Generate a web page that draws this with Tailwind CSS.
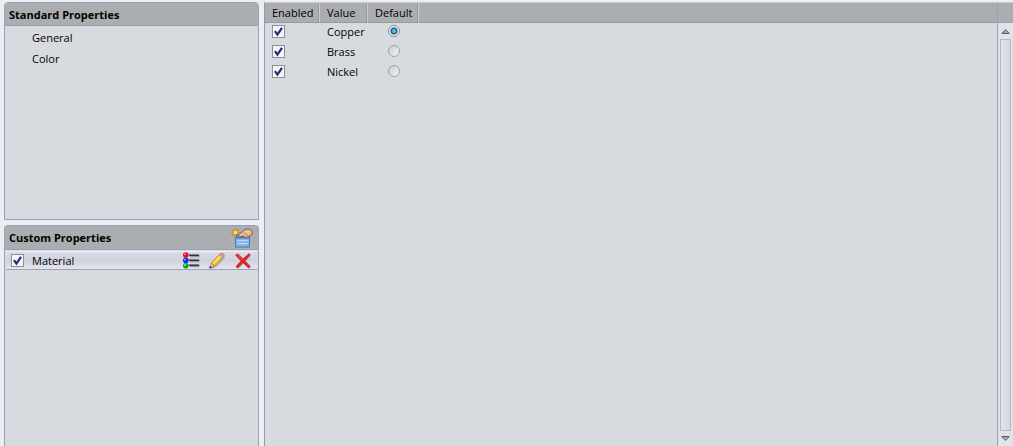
<!DOCTYPE html>
<html lang="en">
<head>
  <meta charset="UTF-8" />
  <meta name="viewport" content="width=device-width, initial-scale=1.0" />
  <title>Properties</title>
  <script src="https://cdn.jsdelivr.net/npm/@tailwindcss/browser@4"></script>
</head>
<body class="h-screen overflow-hidden bg-[#ebeef2] font-['Open_Sans','Noto_Sans',sans-serif] text-[11px] leading-5 text-black">

  <!-- Shared tick mark -->
  <svg class="hidden">
    <symbol id="tick" viewBox="0 0 13 13">
      <path d="M3 6.2 L5.4 9.6 L10 2.8" fill="none" stroke="#29297c" stroke-width="2.2" />
    </symbol>
  </svg>

  <div class="flex h-full pt-0.5 pl-1">

    <!-- Sidebar -->
    <aside class="flex w-[255px] shrink-0 flex-col gap-[5px]">
      <section class="h-[218px] shrink-0 rounded-t border border-[#9aa1bd] bg-[#d7dbe0]">
        <h2 class="h-[23px] rounded-t-[3px] border-b border-[#9aa1bd] bg-[#abadb0] px-1 leading-6 font-bold">Standard Properties</h2>
        <ul class="pt-px pl-[27px] leading-[21px]">
          <li><a href="#general">General</a></li>
          <li><a href="#color">Color</a></li>
        </ul>
      </section>

      <section class="flex-1 rounded-t border border-b-0 border-[#9aa1bd] bg-[#d7dbe0]">
        <div class="flex h-6 items-center justify-between rounded-t-[3px] border-b border-[#9aa1bd] bg-[#abadb0] pr-[5px] pl-1">
          <h2 class="leading-6 font-bold">Custom Properties</h2>
          <button type="button" aria-label="Add property">
            <svg class="block h-[22px] w-[22px]" viewBox="0 0 22 22">
              <rect x="4.5" y="7.5" width="14" height="12.5" fill="#82b6ee" stroke="#4a79b4" />
              <path d="M5 8h13v3.5H5z" fill="#4f82c6" />
              <path d="M6.5 13.5h10M6.5 16.5h10" stroke="#b9d8fa" stroke-width="1" />
              <path d="M7.5 8 C9 6 10.5 5.5 12 4.5 C13.5 2.2 16 1.7 18.5 2.2 C21 3.2 22 5.2 20.8 7.2 C19.5 9.2 18 8.8 16.5 9.8 C15 11.8 13 11.3 13.5 9.6 L12 9.1 L9 9.9 C7.5 10.2 6.8 9 7.5 8Z" fill="#e8c294" stroke="#80552f" stroke-width="1" />
              <path d="M12.5 6.5 L16 6.8 M14 9.3 L17 7.8" stroke="#a77b4e" stroke-width=".7" />
              <path d="M4.5 1v9M0 5.5h9M1.3 2.3l6.4 6.4M7.7 2.3L1.3 8.7" stroke="#e08310" stroke-width="1.2" />
              <circle cx="4.5" cy="5.5" r="1.8" fill="#ffe765" />
            </svg>
          </button>
        </div>

        <div class="mx-px mt-px flex h-[19px] items-center border-y border-t-[#eef0f4] border-b-[#9aa1bd] bg-linear-to-b from-[#d9dce5] via-[#cfd2dd] to-[#e5e6ec] pr-[5px] pl-[5px]">
          <span class="grid size-[13px] place-items-center">
            <input id="material" type="checkbox" checked class="col-start-1 row-start-1 size-[13px] appearance-none border border-[#8e8f8f] bg-[#f4f5f7]" />
            <svg class="pointer-events-none col-start-1 row-start-1 size-[13px]"><use href="#tick" /></svg>
          </span>
          <label for="material" class="flex-1 pl-2">Material</label>
          <div class="flex items-center gap-2">
            <button type="button" aria-label="Edit values">
              <svg class="block h-[18px] w-[18px]" viewBox="0 0 18 18">
                <path d="M8 3.9h9.5M8 8.9h9.5M8 13.9h9.5" stroke="#999ba4" stroke-width="2.5" />
                <path d="M7 3.3h10M7 8.3h10M7 13.3h10" stroke="#343438" stroke-width="1.5" />
                <circle cx="3.8" cy="3" r="2.8" fill="#e60a24" />
                <circle cx="3.8" cy="8.4" r="2.8" fill="#1531df" />
                <circle cx="3.8" cy="13.8" r="2.8" fill="#07a51d" />
                <circle cx="3" cy="2.2" r=".9" fill="#ff9eaa" />
                <circle cx="3" cy="7.6" r=".9" fill="#a8b7ff" />
                <circle cx="3" cy="13" r=".9" fill="#a0f5a8" />
              </svg>
            </button>
            <button type="button" aria-label="Rename">
              <svg class="block h-[18px] w-[18px]" viewBox="0 0 17 18">
                <path d="M2 16.5 L8 14 L16 5" fill="none" stroke="#a9abb5" stroke-width="1.4" />
                <path d="M1 16 L3 11 L6 14Z" fill="#f3d4a4" stroke="#76572a" stroke-width=".6" />
                <path d="M.8 16.2 L1.6 14 L3.2 15.4Z" fill="#26262c" />
                <path d="M3 11 L10.6 2.9 L14 6.2 L6 14Z" fill="#f8c729" stroke="#a57316" stroke-width=".8" />
                <path d="M4.4 11.6 L11.5 4.2" stroke="#fff099" stroke-width="1.1" />
                <path d="M10.6 2.9 L11.7 1.8 L15 5.1 L14 6.2Z" fill="#d7d8df" stroke="#85858e" stroke-width=".5" />
                <path d="M11.7 1.8 Q13.2 .4 14.8 1.8 Q16.7 3.5 15 5.1Z" fill="#e99a8d" stroke="#b5594c" stroke-width=".5" />
              </svg>
            </button>
            <button type="button" aria-label="Delete">
              <svg class="block h-[18px] w-[18px]" viewBox="0 0 17 18">
                <path d="M2.5 3.8 L15.4 16 M15.5 3.7 L3 16.2" stroke="#b3a9b2" stroke-width="2" />
                <path d="M1 3.2 L3.4 1.7 L8.5 6.8 L14.4 1.6 L16 2.7 L10.4 8.7 L16 14.5 L14 16 L8.5 10.8 L3.2 16.1 L1.3 14.6 L6.4 8.9Z" fill="#de2327" stroke="#bd161c" stroke-width=".4" />
                <path d="M3.2 3 L8.5 8.3" stroke="#f26a66" stroke-width=".8" />
              </svg>
            </button>
          </div>
        </div>
      </section>
    </aside>

    <!-- Values list -->
    <main class="ml-[5px] flex min-w-0 flex-1 border-t border-l border-t-[#c5c9d2] border-l-[#969aa5] bg-[#d7dbe0]">
      <div class="min-w-0 flex-1">
        <table class="w-full table-fixed border-separate border-spacing-0 text-left leading-[18px]">
          <thead>
            <tr class="h-5 bg-[#abadb0]">
              <th class="w-[55px] border-r border-b border-r-[#c9cbce] border-b-[#969aa5] p-0 pl-[7px] font-normal shadow-[inset_-1px_0_0_#96989c]">Enabled</th>
              <th class="w-12 border-r border-b border-r-[#c9cbce] border-b-[#969aa5] p-0 pl-[7px] font-normal shadow-[inset_-1px_0_0_#96989c]">Value</th>
              <th class="w-[51px] border-r border-b border-r-[#c9cbce] border-b-[#969aa5] p-0 pl-[7px] font-normal shadow-[inset_-1px_0_0_#96989c]">Default</th>
              <th class="border-b border-[#969aa5] p-0"></th>
            </tr>
          </thead>
          <tbody>
            <tr class="h-5 align-top">
              <td class="p-0 pt-0.5 pl-[7px]">
                <span class="grid size-[13px]">
                  <input type="checkbox" checked aria-label="Enable Copper" class="col-start-1 row-start-1 size-[13px] appearance-none border border-[#8e8f8f] bg-[#f4f5f7]" />
                  <svg class="pointer-events-none col-start-1 row-start-1 size-[13px]"><use href="#tick" /></svg>
                </span>
              </td>
              <td class="p-0 pl-[7px]">Copper</td>
              <td class="p-0 pt-0.5 pl-5"><input type="radio" name="default" checked aria-label="Copper by default" class="block size-3 appearance-none rounded-full border border-[#8e8f8f] bg-[radial-gradient(circle_at_50%_50%,#7fd6f2_0,#2ba0ca_2px,#174f78_3px,#174f78_3px,#e9ebed_4px)]" /></td>
              <td></td>
            </tr>
            <tr class="h-5 align-top">
              <td class="p-0 pt-0.5 pl-[7px]">
                <span class="grid size-[13px]">
                  <input type="checkbox" checked aria-label="Enable Brass" class="col-start-1 row-start-1 size-[13px] appearance-none border border-[#8e8f8f] bg-[#f4f5f7]" />
                  <svg class="pointer-events-none col-start-1 row-start-1 size-[13px]"><use href="#tick" /></svg>
                </span>
              </td>
              <td class="p-0 pl-[7px]">Brass</td>
              <td class="p-0 pt-0.5 pl-5"><input type="radio" name="default" aria-label="Brass by default" class="block size-3 appearance-none rounded-full border border-[#a0a2a5] bg-linear-to-br from-[#c9ccd0] to-[#f2f3f4]" /></td>
              <td></td>
            </tr>
            <tr class="h-5 align-top">
              <td class="p-0 pt-0.5 pl-[7px]">
                <span class="grid size-[13px]">
                  <input type="checkbox" checked aria-label="Enable Nickel" class="col-start-1 row-start-1 size-[13px] appearance-none border border-[#8e8f8f] bg-[#f4f5f7]" />
                  <svg class="pointer-events-none col-start-1 row-start-1 size-[13px]"><use href="#tick" /></svg>
                </span>
              </td>
              <td class="p-0 pl-[7px]">Nickel</td>
              <td class="p-0 pt-0.5 pl-5"><input type="radio" name="default" aria-label="Nickel by default" class="block size-3 appearance-none rounded-full border border-[#a0a2a5] bg-linear-to-br from-[#c9ccd0] to-[#f2f3f4]" /></td>
              <td></td>
            </tr>
          </tbody>
        </table>
      </div>

      <!-- Scrollbar -->
      <div class="flex w-4 shrink-0 flex-col border-l border-[#9aa1bd] bg-[#e1e3e8]">
        <div class="h-5 shrink-0 border-b border-[#9aa1bd] bg-[#abadb0]"></div>
        <button type="button" aria-label="Scroll up" class="flex h-4 shrink-0 items-center justify-center">
          <svg class="h-[5px] w-[9px]" viewBox="0 0 9 5"><path d="M.8 4.4 L4.5 .8 L8.2 4.4Z" fill="#aeb0c0" stroke="#50515f" /></svg>
        </button>
        <div class="mx-0.5 flex-1 border border-[#b5b7c3] bg-linear-to-r from-[#e2e4e9] to-[#d5d7df]"></div>
        <button type="button" aria-label="Scroll down" class="flex h-[15px] shrink-0 items-center justify-center">
          <svg class="h-[5px] w-[9px]" viewBox="0 0 9 5"><path d="M.8 .6 L4.5 4.2 L8.2 .6Z" fill="#aeb0c0" stroke="#50515f" /></svg>
        </button>
      </div>
    </main>
  </div>
</body>
</html>
